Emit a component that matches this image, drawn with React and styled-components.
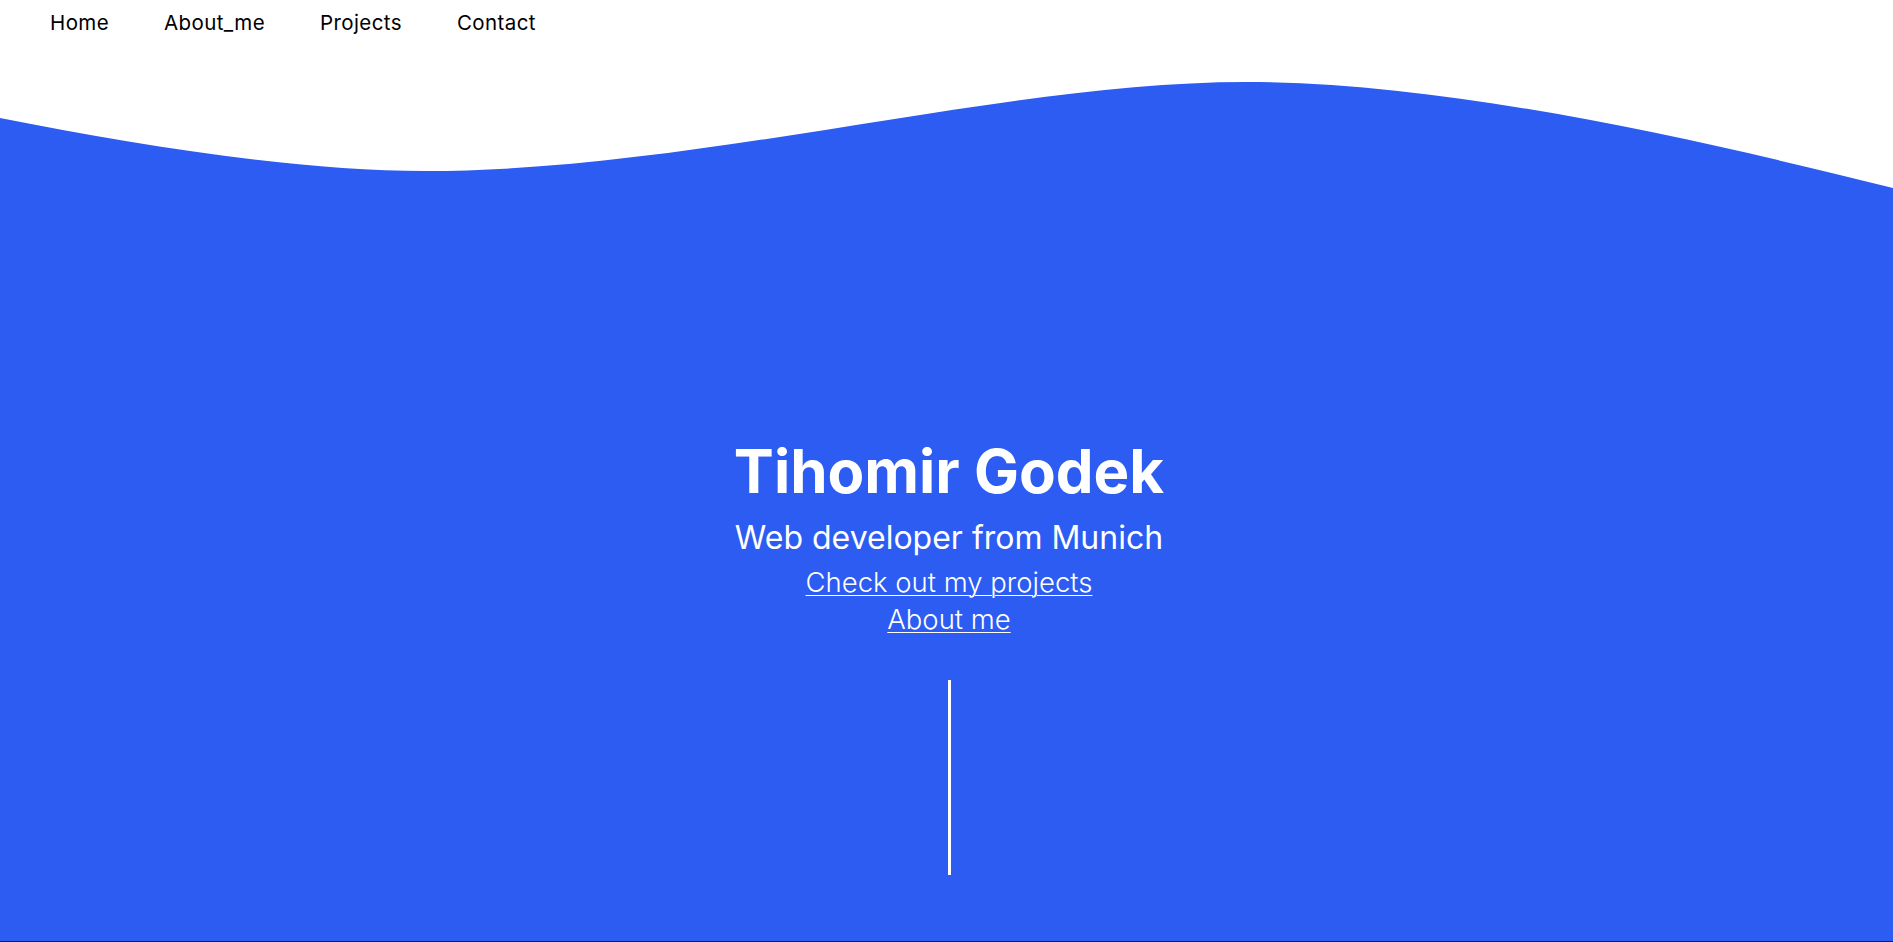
import React from 'react'
import styled, { createGlobalStyle } from 'styled-components'

const BLUE = '#2c5cf2'

const GlobalStyle = createGlobalStyle`
  body {
    margin: 0;
    font-family: Inter, "Open Sans", sans-serif;
    background: #fff;
  }
`

const links = ['Home', 'About_me', 'Projects', 'Contact']

export default function App() {
  return (
    <>
      <GlobalStyle />
      <Navbar>
        {links.map((l) => (
          <NavLink key={l} href="#">{l}</NavLink>
        ))}
      </Navbar>
      <Hero>
        <Wave viewBox="0 45 1893 155" preserveAspectRatio="none">
          <path
            fill={BLUE}
            d="M0,118 C140,146 300,171 425,171 C700,171 1000,82 1246,82 C1450,82 1700,140 1893,188 L1893,200 L0,200 Z"
          />
        </Wave>
        <Content>
          <Title>Tihomir Godek</Title>
          <Subtitle>Web developer from Munich</Subtitle>
          <HeroLink href="#" $first>Check out my projects</HeroLink>
          <HeroLink href="#">About me</HeroLink>
          <ScrollLine />
        </Content>
      </Hero>
      <NextSection />
    </>
  )
}

const Navbar = styled.nav`
display: flex;
align-items: center;
gap: 55px;
height: 45px;
padding-left: 50px;
`
const NavLink = styled.a`
font-size: 20.5px;
letter-spacing: 0.4px;
color: #000;
text-decoration: none;
`
const Hero = styled.section`
display: flex;
flex-direction: column;
`
const Wave = styled.svg`
display: block;
width: 100%;
height: 155px;
`
const Content = styled.div`
background: ${BLUE};
height: 741px;
box-sizing: border-box;
padding-top: 235px;
padding-left: 5px;
display: flex;
flex-direction: column;
align-items: center;
color: #fff;
`
const Title = styled.h1`
margin: 0;
font-size: 60px;
line-height: 72px;
font-weight: 700;
`
const Subtitle = styled.h2`
margin: 10px 0 0;
font-size: 32px;
line-height: 42px;
font-weight: 400;
`
const HeroLink = styled.a`
margin-top: ${(p) => (p.$first ? '5px' : '0')};
font-size: 27.5px;
line-height: 37px;
font-weight: 300;
color: #fff;
text-decoration: underline;
text-decoration-thickness: 1px;
text-underline-offset: 3px;
`
const ScrollLine = styled.div`
margin-top: 42px;
width: 3px;
height: 195px;
background: #fff;
`
const NextSection = styled.section`
height: 300px;
background: #1d2130;
`
